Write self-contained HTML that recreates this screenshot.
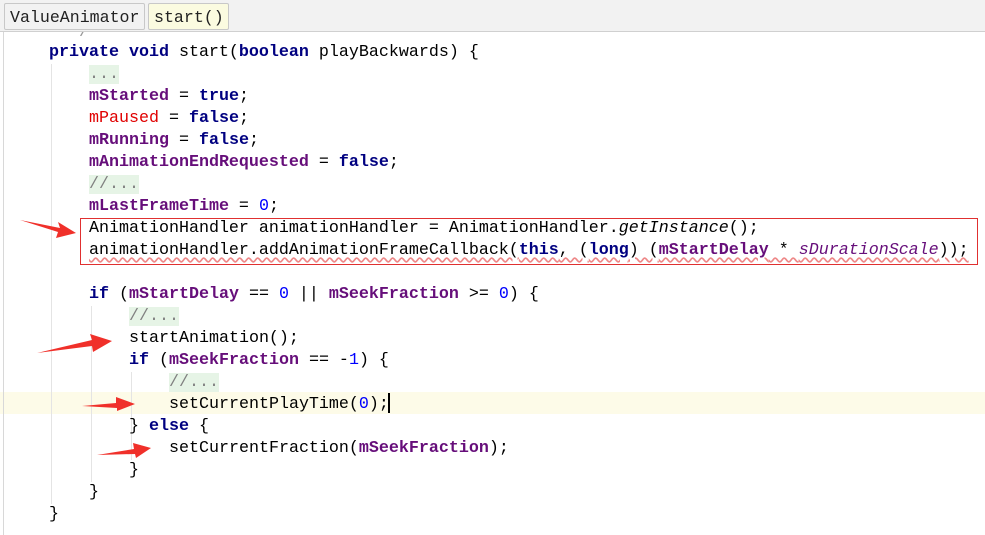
<!DOCTYPE html>
<html><head><meta charset="utf-8"><style>
body{margin:0;width:985px;height:535px;background:#fff;position:relative;overflow:hidden;font-family:"Liberation Mono",monospace;}
.tabs{position:absolute;left:0;top:0;width:985px;height:31px;background:#f2f2f2;border-bottom:1px solid #d0d0d0;z-index:5}
.tab{position:absolute;top:3px;height:27px;border:1px solid #c8c8c8;border-radius:2px;font-size:16.6px;line-height:27px;padding:0 5px;color:#222;box-sizing:border-box;}
.l{position:absolute;white-space:pre;font-size:16.67px;line-height:22px;height:22px;color:#000;}
.k{color:#000080;font-weight:bold}
.f{color:#660e7a;font-weight:bold}
.n{color:#0000ff}
.c{color:#808080;background:#e6f4e6}
.r{color:#e00000}
.i{font-style:italic}
.fi{color:#660e7a;font-style:italic}
.g{position:absolute;width:1px;background:#e4e4e4;}
</style></head><body>
<div style="position:absolute;left:0;top:392px;width:985px;height:22px;background:#fdfbe8"></div>
<div class="g" style="left:3px;top:31px;height:504px;background:#d8d8d8"></div>
<div class="g" style="left:51px;top:64px;height:440px"></div>
<div class="g" style="left:91px;top:306px;height:176px"></div>
<div class="g" style="left:131px;top:372px;height:88px"></div>
<div class="tabs">
<div class="tab" style="left:4px;width:141px;background:#f2f2f2">ValueAnimator</div>
<div class="tab" style="left:148px;width:81px;background:#fbfbe0">start()</div>
</div>
<div class="l" style="left:49px;top:22px;color:#999;">  */</div>
<div class="l" style="left:49px;top:42px"><span class="k">private void</span> start(<span class="k">boolean</span> playBackwards) {</div>
<div class="l" style="left:89px;top:64px"><span class="c">...</span></div>
<div class="l" style="left:89px;top:86px"><span class="f">mStarted</span> = <span class="k">true</span>;</div>
<div class="l" style="left:89px;top:108px"><span class="r">mPaused</span> = <span class="k">false</span>;</div>
<div class="l" style="left:89px;top:130px"><span class="f">mRunning</span> = <span class="k">false</span>;</div>
<div class="l" style="left:89px;top:152px"><span class="f">mAnimationEndRequested</span> = <span class="k">false</span>;</div>
<div class="l" style="left:89px;top:174px"><span class="c">//...</span></div>
<div class="l" style="left:89px;top:196px"><span class="f">mLastFrameTime</span> = <span class="n">0</span>;</div>
<div class="l" style="left:89px;top:218px">AnimationHandler animationHandler = AnimationHandler.<span class="i">getInstance</span>();</div>
<div class="l" style="left:89px;top:240px;text-decoration:underline wavy #e88;text-underline-offset:3px">animationHandler.addAnimationFrameCallback(<span class="k">this</span>, (<span class="k">long</span>) (<span class="f">mStartDelay</span> * <span class="fi">sDurationScale</span>));</div>
<div style="position:absolute;left:80px;top:218px;width:896px;height:45px;border:1px solid #e03030;"></div>
<div class="l" style="left:89px;top:284px"><span class="k">if</span> (<span class="f">mStartDelay</span> == <span class="n">0</span> || <span class="f">mSeekFraction</span> &gt;= <span class="n">0</span>) {</div>
<div class="l" style="left:129px;top:306px"><span class="c">//...</span></div>
<div class="l" style="left:129px;top:328px">startAnimation();</div>
<div class="l" style="left:129px;top:350px"><span class="k">if</span> (<span class="f">mSeekFraction</span> == -<span class="n">1</span>) {</div>
<div class="l" style="left:169px;top:372px"><span class="c">//...</span></div>
<div class="l" style="left:169px;top:394px">setCurrentPlayTime(<span class="n">0</span>);</div>
<div style="position:absolute;left:388px;top:393px;width:2px;height:20px;background:#000"></div>
<div class="l" style="left:129px;top:416px">} <span class="k">else</span> {</div>
<div class="l" style="left:169px;top:438px">setCurrentFraction(<span class="f">mSeekFraction</span>);</div>
<div class="l" style="left:129px;top:460px">}</div>
<div class="l" style="left:89px;top:482px">}</div>
<div class="l" style="left:49px;top:504px">}</div>
<svg style="position:absolute;left:0;top:0" width="985" height="535">
<g fill="#f0302a">
<polygon points="20,220 60,228 58,222 76,233 56,238 58,232"/>
<polygon points="37,353 92,340 90,334 112,341 93,352 92,346"/>
<polygon points="82,406 116,403 116,397 135,404 117,411 117,408"/>
<polygon points="97,455 134,449 133,443 151,448 136,458 135,454"/>
</g>
</svg>
</body></html>
